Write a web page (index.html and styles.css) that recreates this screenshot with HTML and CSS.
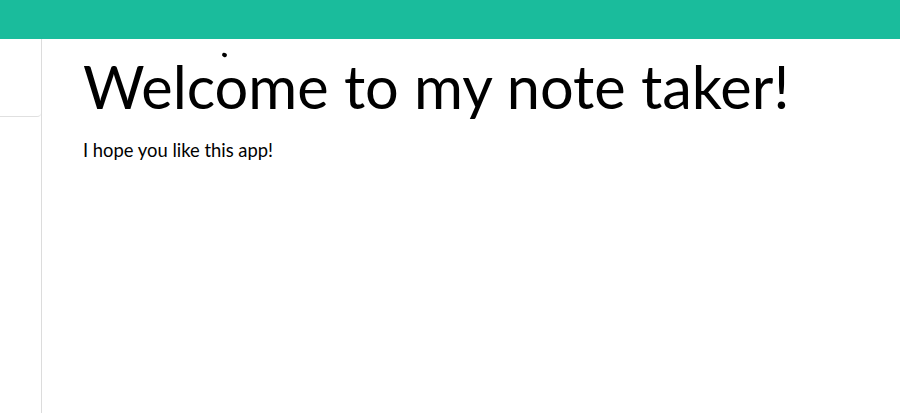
FILE: index.html
```html
<!DOCTYPE html>
<html>
<head>
<meta charset="utf-8">
<link rel="stylesheet" href="styles.css">
</head>
<body>
<header class="topbar"></header>
<div class="main">
  <aside class="sidebar">
    <div class="note-item"></div>
  </aside>
  <section class="content">
    <h1 class="title">Welcome to my note taker!</h1>
    <p class="lead">I hope you like this app!</p>
    <span class="cursor-dot"></span>
  </section>
</div>
</body>
</html>
```

FILE: styles.css
```css
html, body {
  margin: 0;
  padding: 0;
  height: 100%;
  background: #fff;
  font-family: Lato, "Noto Sans", sans-serif;
  color: #000;
  overflow: hidden;
}
.topbar {
  height: 39px;
  background: #1abc9c;
}
.main {
  display: flex;
  height: calc(100% - 39px);
}
.sidebar {
  width: 41px;
  border-right: 1px solid #dcdcdc;
  flex-shrink: 0;
}
.note-item {
  height: 77px;
  margin-left: -10px;
  border: 1px solid #e0e0e0;
  border-top: none;
  border-right: none;
  border-bottom-right-radius: 4px;
}
.content {
  position: relative;
  padding-left: 41px;
}
.title {
  margin: 9px 0 0 0;
  font-size: 59.5px;
  font-weight: 400;
  line-height: 76px;
}
.lead {
  margin: 14px 0 0 0;
  font-size: 18.4px;
  line-height: 24px;
}
.cursor-dot {
  position: absolute;
  left: 180px;
  top: 14px;
  width: 5px;
  height: 4px;
  border-radius: 50%;
  background: #000;
  transform: rotate(20deg);
}
```
